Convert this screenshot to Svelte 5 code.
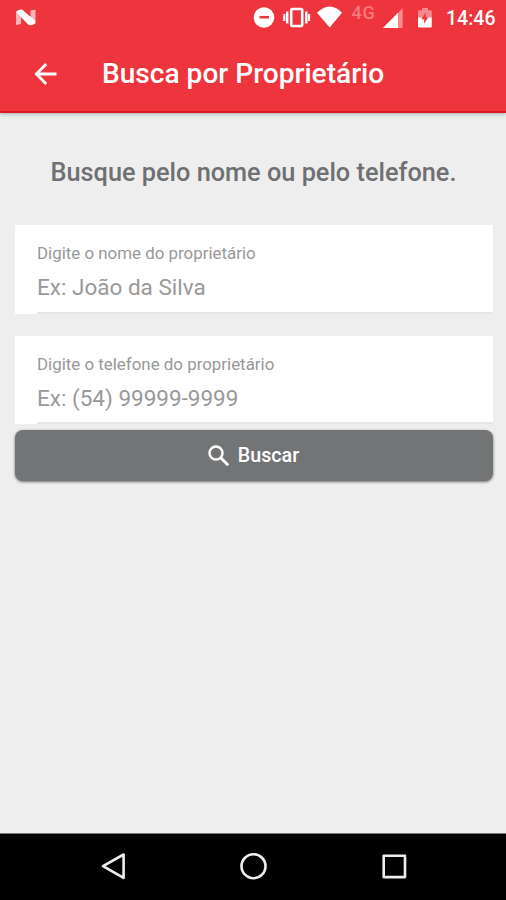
<script>
  const fields = [
    { label: 'Digite o nome do proprietário', hint: 'Ex: João da Silva', id: 'nome' },
    { label: 'Digite o telefone do proprietário', hint: 'Ex: (54) 99999-9999', id: 'telefone' }
  ];
</script>

<div class="screen">
  <header>
    <div class="status">
      <svg class="logo" width="22" height="18" viewBox="0 0 22 18">
        <path d="M1 2.5 L6 1.5 V15 L1 16Z M20.5 0.5 V15 L15.5 15.5 V1.5Z" fill="#fbb5b8" />
        <path d="M1.2 3 Q2.5 .3 7 .4 L20.5 12 Q20 15.6 16 16.3 Q14 16.4 12.8 15.2Z" fill="#fff" />
      </svg>
      <svg class="icons" width="186" height="34" viewBox="250 0 186 34">
        <circle cx="264" cy="17.5" r="10.3" fill="#fff" />
        <path d="M259.5 17.2h9.5" stroke="#ed343c" stroke-width="2.5" />
        <g fill="none" stroke="#fff">
          <rect x="291.2" y="9" width="11" height="17" rx="1.2" stroke-width="2.6" />
          <path d="M287.2 11.5v12M306.3 11.5v12" stroke-width="2.4" />
          <path d="M284.3 14v7M309 14v7" stroke-width="2.2" />
        </g>
        <path d="M317 12.7Q330 .2 342 12.7L329.7 27.5Z" fill="#fff" />
        <text x="351.5" y="18.8" class="net">4G</text>
        <path d="M402.7 8v20H383Z" fill="#f5898d" />
        <path d="M398 12.8v15.2H383Z" fill="#fff" />
        <path d="M418 11.5q0-1.2 1.2-1.2h2.8V8h6v2.3h2.6q1.2 0 1.2 1.2V18H418Z" fill="#f5898d" />
        <path d="M418 17.5h13.8v8.8q0 1.3-1.3 1.3h-11.2q-1.3 0-1.3-1.3Z" fill="#fff" />
        <path d="M425.6 12.5l-4.3 6.7h2.9v4.6l4-6.6h-2.6Z" fill="#ed343c" />
      </svg>
      <span class="clock">14:46</span>
    </div>
    <div class="toolbar">
      <svg class="back" width="24" height="24" viewBox="0 0 24 24" fill="none" stroke="#fff" stroke-width="2.8">
        <path d="M22.5 12H3M12.2 2L2.4 12l9.8 10" />
      </svg>
      <h1>Busca por Proprietário</h1>
    </div>
  </header>
  <main>
    <h2>Busque pelo nome ou pelo telefone.</h2>
    {#each fields as field (field.id)}
      <div class="field {field.id}">
        <div class="label">{field.label}</div>
        <div class="hint">{field.hint}</div>
        <div class="rule"></div>
      </div>
    {/each}
    <button>
      <svg width="22" height="22" viewBox="0 0 22 22" fill="none" stroke="#fff" stroke-width="2.5">
        <circle cx="8" cy="8" r="6.5" />
        <path d="M12.7 12.7l7.5 7.5" stroke-width="2.9" />
      </svg>
      <span>Buscar</span>
    </button>
  </main>
  <nav>
    <svg width="506" height="66" viewBox="0 833 506 66" fill="none" stroke="#eee" stroke-width="2.6" stroke-linejoin="round">
      <path d="M123.6 854.5v23.4L103 866.2Z" />
      <circle cx="253.5" cy="866.2" r="12" />
      <rect x="383.7" y="855.8" width="21.3" height="21.3" />
    </svg>
  </nav>
</div>

<style>
  .screen {
    width: 506px;
    height: 900px;
    display: flex;
    flex-direction: column;
    background: #eee;
    font-family: Roboto, sans-serif;
    overflow: hidden;
  }
  header {
    height: 113px;
    box-sizing: border-box;
    background: #ee343c;
    border-bottom: 2px solid #de1820;
    box-shadow: 0 1px 4px rgba(60, 90, 100, 0.45);
    color: #fff;
  }
  .status {
    height: 36px;
    display: flex;
    align-items: flex-start;
  }
  .logo { margin: 9px 0 0 15px; }
  .icons { margin: 0 0 0 213px; }
  .net { font: 500 18px Roboto, sans-serif; fill: #f5797f; letter-spacing: 0.8px; }
  .clock { margin: 7px 0 0 10px; font-size: 19.5px; font-weight: 500; line-height: 24px; }
  .toolbar {
    height: 75px;
    display: flex;
    align-items: center;
  }
  .back { margin-left: 34px; }
  h1 { margin: 0 0 0 44px; font-size: 28.1px; font-weight: 500; line-height: 36px; white-space: nowrap; }
  main { flex: 1; padding: 0 13px 0 15px; }
  h2 {
    margin: 43px 0 0;
    padding-left: 35.5px;
    font-size: 25.3px;
    font-weight: 500;
    line-height: 34px;
    color: #6e7072;
    white-space: nowrap;
  }
  .field {
    height: 89px;
    box-sizing: border-box;
    padding: 18px 0 0 22px;
    background: #fff;
    display: flex;
    flex-direction: column;
  }
  .nome { margin-top: 35px; }
  .telefone { margin-top: 22px; height: 88px; }
  .label { font-size: 16.9px; line-height: 20px; color: #989898; }
  .hint { margin-top: 10px; font-size: 22.5px; line-height: 28px; color: #999; }
  .rule { margin-top: auto; height: 2px; background: #e6e6e6; }
  button {
    width: 100%;
    height: 51px;
    margin-top: 6px;
    padding: 0 1px 0 0;
    border: 0;
    border-radius: 8px;
    background: #727476;
    box-shadow: 0 1px 3px rgba(0, 0, 0, 0.55);
    display: flex;
    align-items: center;
    justify-content: center;
    gap: 8px;
    color: #fff;
    font: 500 19.7px/24px Roboto, sans-serif;
  }
  nav { height: 66px; border-top: 1px solid #777; background: #000; }
  nav svg { display: block; margin-top: -1px; }
</style>
